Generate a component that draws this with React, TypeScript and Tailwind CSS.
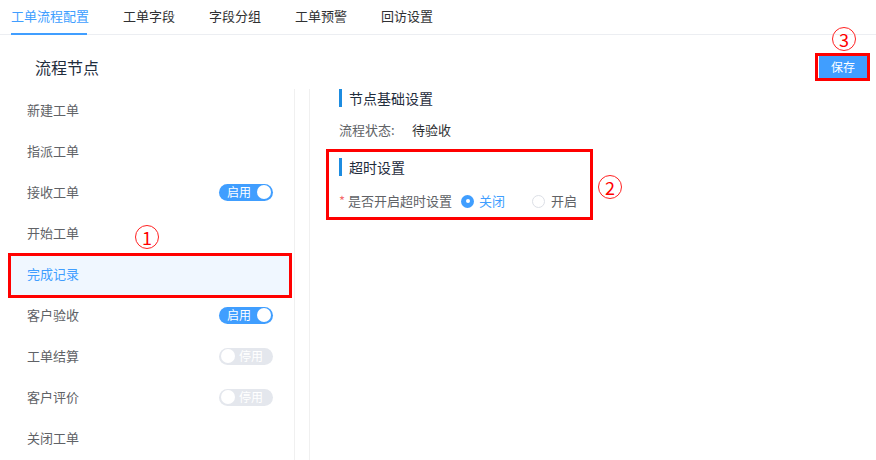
import React from "react";

const font = { fontFamily: '"Noto Sans CJK SC", "Noto Sans", sans-serif' };

function Toggle({ on }: { on: boolean }) {
  return on ? (
    <div className="relative flex h-[17px] w-[54px] items-center rounded-full bg-[#409eff]">
      <span className="ml-[8px] text-[12px] leading-none text-white">启用</span>
      <span className="absolute right-[2px] top-[1.5px] h-[14px] w-[14px] rounded-full bg-white" />
    </div>
  ) : (
    <div className="relative flex h-[17px] w-[54px] items-center rounded-full bg-[#e4e7ed]">
      <span className="absolute left-[2px] top-[1.5px] h-[14px] w-[14px] rounded-full bg-white" />
      <span className="ml-[20px] text-[12px] leading-none text-white">停用</span>
    </div>
  );
}

function Circled({ n }: { n: string }) {
  return (
    <div className="flex h-[24px] w-[24px] items-center justify-center rounded-full border border-[#ff2020] text-[18px] leading-none text-[#ff0000]">
      {n}
    </div>
  );
}

const items: { name: string; toggle?: boolean }[] = [
  { name: "新建工单" },
  { name: "指派工单" },
  { name: "接收工单", toggle: true },
  { name: "开始工单" },
  { name: "完成记录" },
  { name: "客户验收", toggle: true },
  { name: "工单结算", toggle: false },
  { name: "客户评价", toggle: false },
  { name: "关闭工单" },
];

export default function App() {
  const tabs = ["工单流程配置", "工单字段", "字段分组", "工单预警", "回访设置"];
  return (
    <div className="h-[460px] w-[876px] overflow-hidden bg-white" style={font}>
      {/* tabs */}
      <div className="flex h-[35px] items-stretch gap-[34px] border-b border-[#eceef2] pl-[11px]">
        {tabs.map((t, i) => (
          <div
            key={t}
            className={
              "relative flex items-start pt-[6px] text-[13px] leading-[20px] " +
              (i === 0 ? "text-[#409eff]" : "text-[#303133]")
            }
          >
            {t}
            {i === 0 && <span className="absolute bottom-[-1px] left-0 right-[2px] h-[2px] bg-[#409eff]" />}
          </div>
        ))}
      </div>

      {/* header */}
      <div className="flex h-[54px] items-center justify-between pt-[10px]">
        <div className="ml-[35px] text-[16px] font-normal text-[#1f2d3d]">流程节点</div>
        <div className="relative mr-[9px]">
          <div className="flex h-[22px] w-[48px] items-center justify-center bg-[#409eff] text-[12px] text-white">
            保存
          </div>
          <div className="pointer-events-none absolute left-[-4px] top-[-3px] h-[28px] w-[55px] border-[3px] border-[#ff0000]" />
          <div className="absolute left-[13px] top-[-29px]">
            <Circled n="3" />
          </div>
        </div>
      </div>

      {/* content */}
      <div className="flex h-[371px]">
        <div className="w-[295px] border-r border-[#f0f0f0] pl-[10px] pr-[4px] pt-[0.5px]">
          {items.map((it, i) => {
            const selected = i === 4;
            return (
              <div
                key={it.name}
                className={
                  "relative flex h-[41px] items-center justify-between pl-[17px] pr-[17px] text-[13px] " +
                  (selected ? "bg-[#f0f7ff] text-[#409eff]" : "text-[#606266]")
                }
              >
                <span>{it.name}</span>
                {it.toggle !== undefined && <Toggle on={it.toggle} />}
                {selected && (
                  <div className="pointer-events-none absolute left-[-2px] right-[-2px] top-[-1px] bottom-[-3px] border-[3px] border-[#ff0000]" />
                )}
                {i === 3 && (
                  <div className="absolute left-[125px] top-[12px]">
                    <Circled n="1" />
                  </div>
                )}
              </div>
            );
          })}
        </div>
        <div className="ml-[14px] flex-1 border-l border-[#f0f0f0] pl-[29px]">
          <div className="flex h-[18px] items-center">
            <span className="h-[18px] w-[3px] bg-[#1d8ce0]" />
            <span className="ml-[7px] text-[14px] text-[#1f2d3d]">节点基础设置</span>
          </div>
          <div className="mt-[12px] flex h-[22px] items-center text-[13px]">
            <span className="w-[73px] text-[#606266]">流程状态:</span>
            <span className="text-[#303133]">待验收</span>
          </div>
          <div className="relative mt-[17px]">
            <div className="flex h-[18px] items-center">
              <span className="h-[18px] w-[3px] bg-[#1d8ce0]" />
              <span className="ml-[7px] text-[14px] text-[#1f2d3d]">超时设置</span>
            </div>
            <div className="mt-[14px] flex h-[22px] items-center text-[13px]">
              <span className="mr-[3px] text-[#f56c6c]">*</span>
              <span className="text-[#606266]">是否开启超时设置</span>
              <span className="ml-[9px] flex h-[13px] w-[13px] items-center justify-center rounded-full bg-[#409eff]">
                <span className="h-[4px] w-[4px] rounded-full bg-white" />
              </span>
              <span className="ml-[5px] text-[#409eff]">关闭</span>
              <span className="ml-[27px] h-[13px] w-[13px] rounded-full border border-[#dcdfe6]" />
              <span className="ml-[6px] text-[#606266]">开启</span>
            </div>
            <div className="pointer-events-none absolute left-[-13px] top-[-9px] h-[71px] w-[267px] border-[3px] border-[#ff0000]" />
            <div className="absolute left-[259px] top-[17px]">
              <Circled n="2" />
            </div>
          </div>
        </div>
      </div>
    </div>
  );
}
